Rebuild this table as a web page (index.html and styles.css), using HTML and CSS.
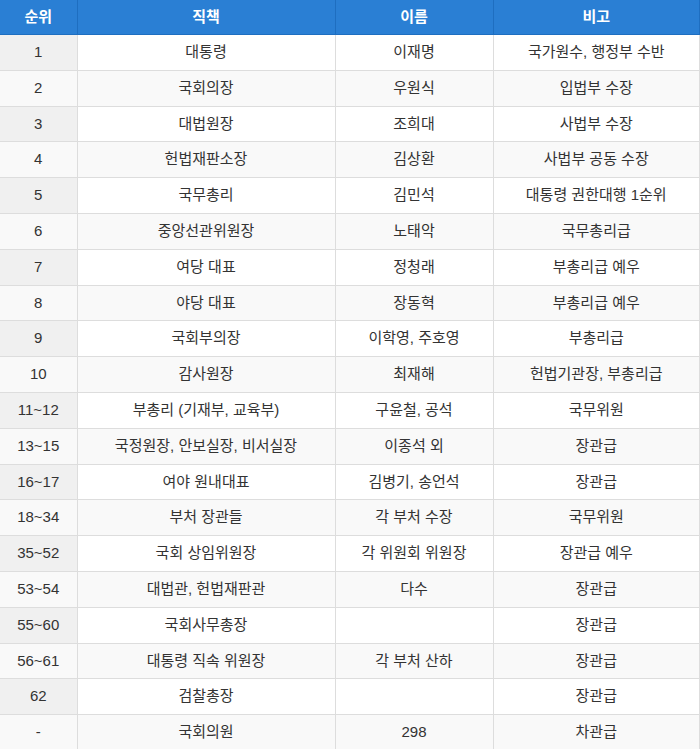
FILE: index.html
```html
<!DOCTYPE html>
<html lang="ko">
<head>
<meta charset="utf-8">
<title>의전 서열</title>
<link rel="stylesheet" href="styles.css">
</head>
<body>
<table class="rank">
<thead>
<tr><th class="c1">순위</th><th class="c2">직책</th><th class="c3">이름</th><th class="c4">비고</th></tr>
</thead>
<tbody>
<tr><td class="num">1</td><td>대통령</td><td>이재명</td><td>국가원수, 행정부 수반</td></tr>
<tr><td class="num">2</td><td>국회의장</td><td>우원식</td><td>입법부 수장</td></tr>
<tr><td class="num">3</td><td>대법원장</td><td>조희대</td><td>사법부 수장</td></tr>
<tr><td class="num">4</td><td>헌법재판소장</td><td>김상환</td><td>사법부 공동 수장</td></tr>
<tr><td class="num">5</td><td>국무총리</td><td>김민석</td><td>대통령 권한대행 1순위</td></tr>
<tr><td class="num">6</td><td>중앙선관위원장</td><td>노태악</td><td>국무총리급</td></tr>
<tr><td class="num">7</td><td>여당 대표</td><td>정청래</td><td>부총리급 예우</td></tr>
<tr><td class="num">8</td><td>야당 대표</td><td>장동혁</td><td>부총리급 예우</td></tr>
<tr><td class="num">9</td><td>국회부의장</td><td>이학영, 주호영</td><td>부총리급</td></tr>
<tr><td class="num">10</td><td>감사원장</td><td>최재해</td><td>헌법기관장, 부총리급</td></tr>
<tr><td class="num">11~12</td><td>부총리 (기재부, 교육부)</td><td>구윤철, 공석</td><td>국무위원</td></tr>
<tr><td class="num">13~15</td><td>국정원장, 안보실장, 비서실장</td><td>이종석 외</td><td>장관급</td></tr>
<tr><td class="num">16~17</td><td>여야 원내대표</td><td>김병기, 송언석</td><td>장관급</td></tr>
<tr><td class="num">18~34</td><td>부처 장관들</td><td>각 부처 수장</td><td>국무위원</td></tr>
<tr><td class="num">35~52</td><td>국회 상임위원장</td><td>각 위원회 위원장</td><td>장관급 예우</td></tr>
<tr><td class="num">53~54</td><td>대법관, 헌법재판관</td><td>다수</td><td>장관급</td></tr>
<tr><td class="num">55~60</td><td>국회사무총장</td><td></td><td>장관급</td></tr>
<tr><td class="num">56~61</td><td>대통령 직속 위원장</td><td>각 부처 산하</td><td>장관급</td></tr>
<tr><td class="num">62</td><td>검찰총장</td><td></td><td>장관급</td></tr>
<tr><td class="num">-</td><td>국회의원</td><td>298</td><td>차관급</td></tr>
</tbody>
</table>
</body>
</html>
```

FILE: styles.css
```css
html, body {
  margin: 0;
  padding: 0;
  background: #ffffff;
}
body {
  font-family: "Liberation Sans", "Noto Sans CJK KR", sans-serif;
  font-size: 15px;
  color: #333333;
}
.rank {
  width: 700px;
  border-collapse: collapse;
  table-layout: fixed;
}
.rank th,
.rank td {
  box-sizing: border-box;
  text-align: center;
  padding: 8px 0;
  line-height: 18.8px;
  border: 1px solid #dddddd;
  white-space: nowrap;
}
.rank th {
  background: #2a7fd4;
  color: #ffffff;
  font-weight: bold;
  line-height: 18px;
  border-color: #1e6ec0;
  border-top: none;
}
.rank th:first-child,
.rank td:first-child { border-left: none; }
.rank .c1 { width: 77px; }
.rank .c2 { width: 258px; }
.rank .c3 { width: 158px; }
.rank tbody tr:nth-child(even) td { background: #f9f9f9; }
.rank tbody td.num { background: #f0f0f0; }
```
